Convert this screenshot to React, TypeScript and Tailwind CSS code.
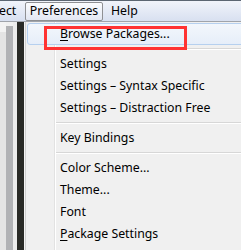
import React from "react";

const font = { fontFamily: '"Noto Sans", "Liberation Sans", sans-serif' };

function Item({ children }: { children: React.ReactNode }) {
  return (
    <div className="h-[22px] flex items-center pl-[34px] text-[12.3px] text-black whitespace-nowrap">
      {children}
    </div>
  );
}

function Sep() {
  return (
    <div className="h-[8px] flex flex-col justify-center pl-[30px]">
      <div className="h-px bg-[#d7d7d7]" />
      <div className="h-px bg-white" />
    </div>
  );
}

export default function App() {
  return (
    <div className="w-[241px] h-[250px] overflow-hidden relative bg-[#f0f0f0]" style={font}>
      {/* menubar */}
      <div className="h-[22px] flex flex-col">
        <div className="h-px bg-[#5c6672]" />
        <div className="flex-1 flex items-center bg-gradient-to-b from-[#f1f4fa] to-[#d8e0f0] text-[12.3px] text-black">
          <div className="w-[26px] pl-0 -ml-[1px]">ect</div>
          <div className="h-[19px] w-[78px] flex items-center justify-center border border-[#8f9093] rounded-[2px] bg-gradient-to-b from-[#fbfcfe] to-[#e2e7f2]">
            Preferences
          </div>
          <div className="ml-[8px]">Help</div>
        </div>
        <div className="h-px bg-[#a0a4ab]" />
      </div>
      {/* body */}
      <div className="flex h-[228px]">
        <div className="w-[25px] flex shrink-0">
          <div className="w-[6px] bg-[#e4e4e4] flex flex-col">
            <div className="h-[10px] bg-[#f3f3f3]" />
          </div>
          <div className="w-[7px] bg-[#b1b2b5] mt-[4px]" />
          <div className="w-[4px] bg-[#ececec]" />
          <div className="w-[7px] bg-[#292a26]" />
          <div className="w-px bg-[#f4f4f4]" />
        </div>
        <div className="relative flex-1 border-l border-[#cfcfcf] bg-[#f0f0f0] pt-[1px]">
          {/* gutter line */}
          <div className="absolute left-[28px] top-0 bottom-0 w-[2px] flex">
            <div className="w-px bg-[#e2e2e2]" />
            <div className="w-px bg-white" />
          </div>
          <div className="relative">
            <div className="mx-[1px] h-[22px] relative">
              <div className="absolute inset-0 -right-[4px] rounded-[3px] border border-[#b6d0ef] bg-gradient-to-b from-[#f3f7fc] to-[#e6eef9]" />
              <div className="relative h-full flex items-center pl-[33px] text-[12.3px] text-black whitespace-nowrap">
                <span>
                  <span className="underline underline-offset-2">B</span>rowse Packages...
                </span>
              </div>
            </div>
            <Sep />
            <Item>Settings</Item>
            <Item>Settings – Syntax Specific</Item>
            <Item>Settings – Distraction Free</Item>
            <Sep />
            <Item>Key Bindings</Item>
            <Sep />
            <Item>Color Scheme...</Item>
            <Item>Theme...</Item>
            <Item>Font</Item>
            <Item>
              <span>
                <span className="underline underline-offset-2">P</span>ackage Settings
              </span>
            </Item>
          </div>
        </div>
      </div>
      {/* annotation */}
      <div className="absolute left-[44px] top-[26px] w-[143px] h-[24px] border-[3px] border-[#ff3333]" />
    </div>
  );
}
